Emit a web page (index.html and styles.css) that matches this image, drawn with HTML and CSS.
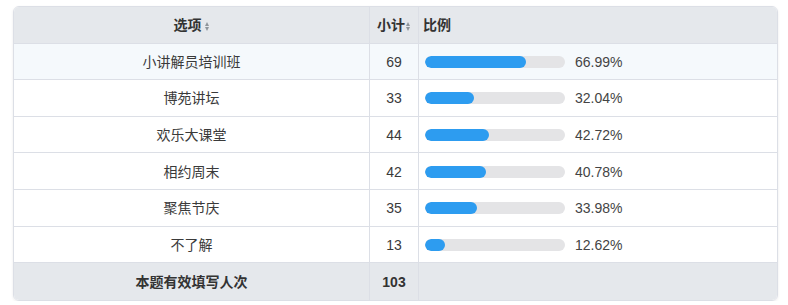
FILE: index.html
```html
<!DOCTYPE html>
<html lang="zh">
<head>
<meta charset="utf-8">
<link rel="stylesheet" href="styles.css">
</head>
<body>
<div class="wrap">
<table class="stat">
<thead>
<tr>
<th class="c-opt">选项<span class="sort"></span></th>
<th class="c-cnt">小计<span class="sort tight"></span></th>
<th class="c-pct">比例</th>
</tr>
</thead>
<tbody>
<tr class="hl"><td class="c-opt">小讲解员培训班</td><td class="c-cnt">69</td><td class="c-pct"><div class="pct"><div class="track"><div class="fill" style="width:calc(66.99% + 7px)"></div></div><span class="num">66.99%</span></div></td></tr>
<tr><td class="c-opt">博苑讲坛</td><td class="c-cnt">33</td><td class="c-pct"><div class="pct"><div class="track"><div class="fill" style="width:calc(32.04% + 4px)"></div></div><span class="num">32.04%</span></div></td></tr>
<tr><td class="c-opt">欢乐大课堂</td><td class="c-cnt">44</td><td class="c-pct"><div class="pct"><div class="track"><div class="fill" style="width:calc(42.72% + 4px)"></div></div><span class="num">42.72%</span></div></td></tr>
<tr><td class="c-opt">相约周末</td><td class="c-cnt">42</td><td class="c-pct"><div class="pct"><div class="track"><div class="fill" style="width:calc(40.78% + 4px)"></div></div><span class="num">40.78%</span></div></td></tr>
<tr><td class="c-opt">聚焦节庆</td><td class="c-cnt">35</td><td class="c-pct"><div class="pct"><div class="track"><div class="fill" style="width:calc(33.98% + 4px)"></div></div><span class="num">33.98%</span></div></td></tr>
<tr><td class="c-opt">不了解</td><td class="c-cnt">13</td><td class="c-pct"><div class="pct"><div class="track"><div class="fill" style="width:calc(12.62% + 2px)"></div></div><span class="num">12.62%</span></div></td></tr>
</tbody>
<tfoot>
<tr><td class="c-opt">本题有效填写人次</td><td class="c-cnt">103</td><td class="c-pct"></td></tr>
</tfoot>
</table>
</div>
</body>
</html>
```
FILE: styles.css
```css
html, body { margin: 0; padding: 0; background: #fff; }
body {
  font-family: "Liberation Sans", "Noto Sans CJK SC", sans-serif;
  font-size: 14px;
  color: #333;
}
.wrap { padding: 6px 10px 0 13px; }
.stat {
  width: 765px;
  border-collapse: separate;
  border-spacing: 0;
  border: 1px solid #dcdfe6;
  border-radius: 6px;
  overflow: hidden;
  table-layout: fixed;
  box-shadow: 0 1px 3px rgba(0,0,0,0.08);
}
.stat th, .stat td {
  height: 36.6px;
  box-sizing: border-box;
  padding: 1px 6px 0;
  border-bottom: 1px solid #dcdfe6;
  border-right: 1px solid #dcdfe6;
  vertical-align: middle;
  line-height: 20px;
}
.stat tr > :last-child { border-right: none; }
.stat tfoot td { border-bottom: none; }
.stat thead th, .stat tfoot td {
  background: #e5e8ec;
  font-weight: bold;
  color: #333;
}
.stat thead th { padding-top: 0; }
.stat tbody tr.hl td { background: #f5f9fc; }
.stat tbody td { color: #3a3a3a; }
.c-opt { width: 356px; text-align: center; }
.c-cnt { width: 49px; text-align: center; padding-left: 0 !important; padding-right: 0 !important; }
.c-pct { text-align: left; }
th.c-pct { padding-left: 4px; }
.pct { display: flex; align-items: center; gap: 10px; }
.track {
  width: 140px;
  height: 12px;
  border-radius: 6px;
  background: #e4e4e6;
  overflow: hidden;
}
.fill {
  height: 100%;
  border-radius: 6px;
  background: #2d9cf0;
}
.num { color: #444; }
.sort {
  display: inline-block;
  width: 5px;
  height: 9px;
  margin-left: 3px;
  vertical-align: -1px;
  position: relative;
}
.sort.tight { margin-left: 1px; }
.sort::before, .sort::after {
  content: "";
  position: absolute;
  left: 0;
  border-left: 2.5px solid transparent;
  border-right: 2.5px solid transparent;
}
.sort::before { top: 0; border-bottom: 4px solid #8f959b; }
.sort::after { bottom: 0; border-top: 4px solid #8f959b; }
```
